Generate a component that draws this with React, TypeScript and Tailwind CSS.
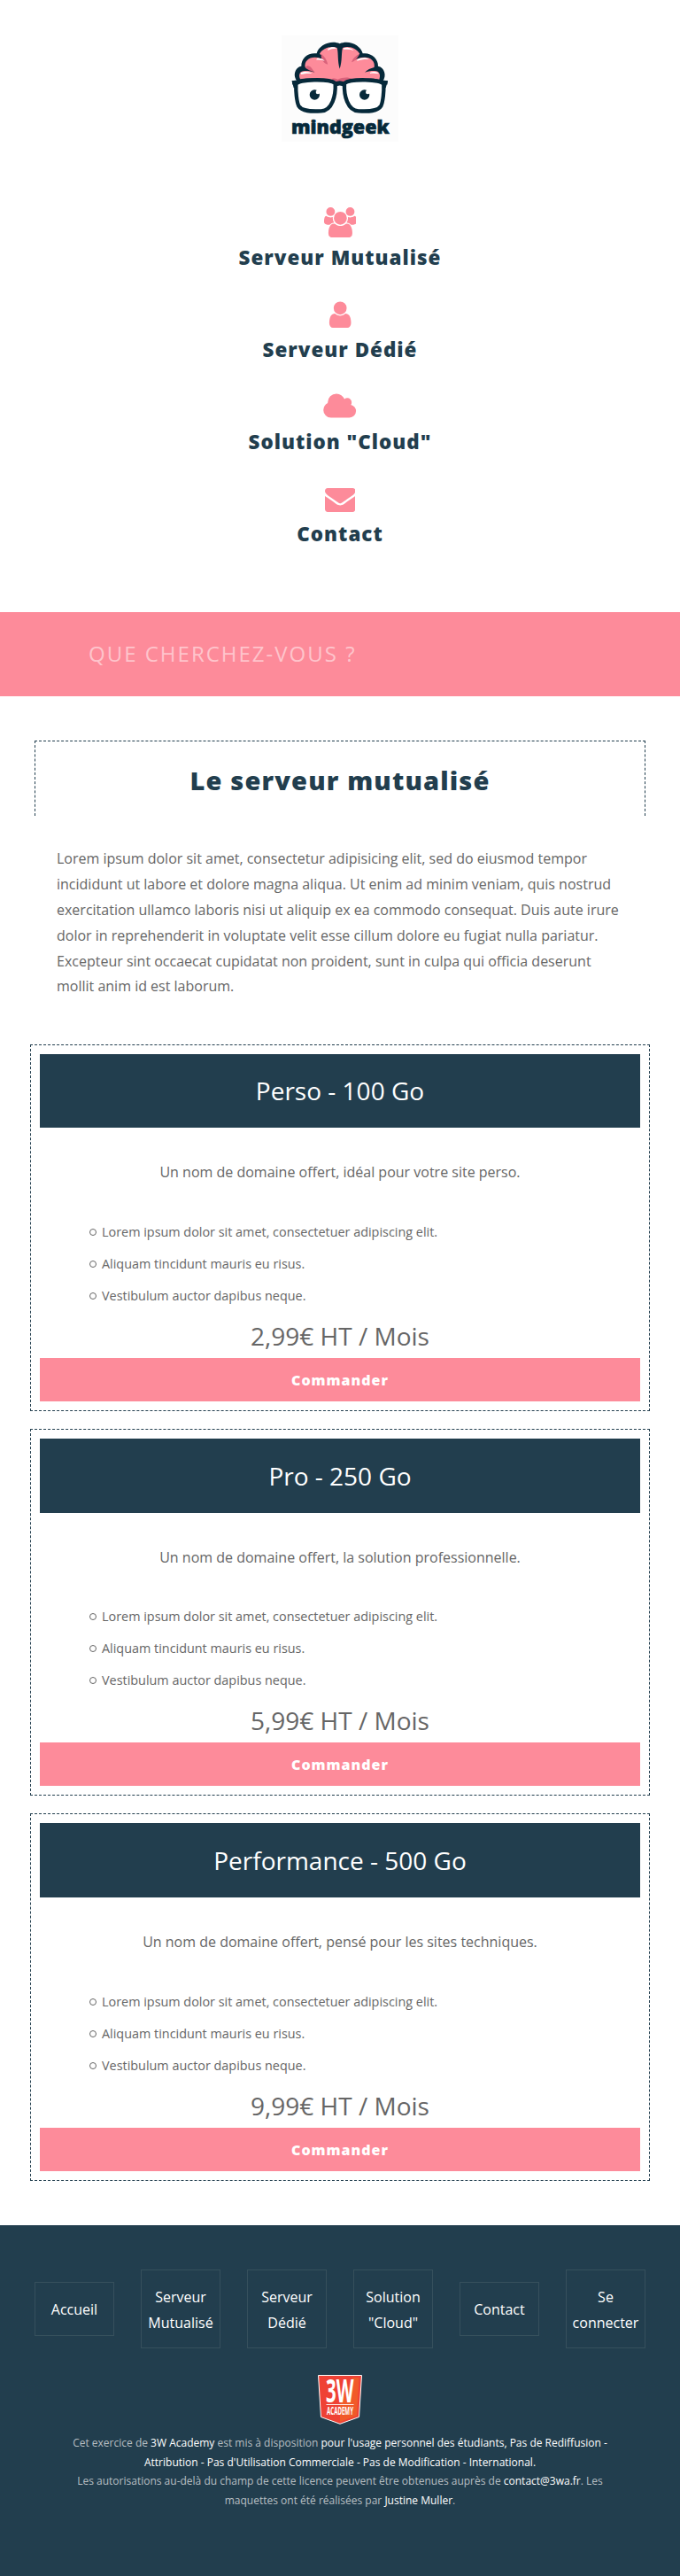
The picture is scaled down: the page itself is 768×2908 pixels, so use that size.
import React from "react";

const ICONS = {
  users: {
    width: 1920,
    d: "M593 896q-162 5-265 128h-134q-82 0-138-40.5t-56-118.5q0-353 124-353 6 0 43.5 21t97.5 42.5 119 21.5q67 0 133-23-5 37-5 66 0 139 81 256zm1071 637q0 120-73 189.5t-194 69.5h-874q-121 0-194-69.5t-73-189.5q0-53 3.5-103.5t14-109 26.5-108.5 43-97.5 62-81 85.5-53.5 111.5-20q10 0 43 21.5t73 48 107 48 135 21.5 135-21.5 107-48 73-48 43-21.5q61 0 111.5 20t85.5 53.5 62 81 43 97.5 26.5 108.5 14 109 3.5 103.5zm-1024-1277q0 106-75 181t-181 75-181-75-75-181 75-181 181-75 181 75 75 181zm704 384q0 159-112.5 271.5t-271.5 112.5-271.5-112.5-112.5-271.5 112.5-271.5 271.5-112.5 271.5 112.5 112.5 271.5zm576 225q0 78-56 118.5t-138 40.5h-134q-103-123-265-128 81-117 81-256 0-29-5-66 66 23 133 23 59 0 119-21.5t97.5-42.5 43.5-21q124 0 124 353zm-128-609q0 106-75 181t-181 75-181-75-75-181 75-181 181-75 181 75 75 181z",
  },
  user: {
    width: 1792,
    d: "M1536 1399q0 109-62.5 187t-150.5 78h-854q-88 0-150.5-78t-62.5-187q0-85 8.5-160.5t31.5-152 58.5-131 94-89 134.5-34.5q131 128 313 128t313-128q76 0 134.5 34.5t94 89 58.5 131 31.5 152 8.5 160.5zm-256-887q0 159-112.5 271.5t-271.5 112.5-271.5-112.5-112.5-271.5 112.5-271.5 271.5-112.5 271.5 112.5 112.5 271.5z",
  },
  cloud: {
    width: 2048,
    d: "M1984 1152q0 159-112.5 271.5t-271.5 112.5h-1088q-185 0-316.5-131.5t-131.5-316.5q0-132 71-241.5t187-163.5q-2-28-2-43 0-212 150-362t362-150q158 0 286.5 88t187.5 230q70-62 166-62 106 0 181 75t75 181q0 75-41 138 129 30 213 134.5t84 239.5z",
  },
  envelope: {
    width: 1792,
    d: "M1792 710v794q0 66-47 113t-113 47h-1472q-66 0-113-47t-47-113v-794q44 49 101 87 362 246 497 345 57 42 92.5 65.5t94.5 48 110 24.5h2q51 0 110-24.5t94.5-48 92.5-65.5q170-123 498-345 57-39 100-87zm0-294q0 79-49 151t-122 123q-376 261-468 325-10 7-42.5 31t-54 38.8-52 33.2-57.5 27.5-50 9h-2q-23 0-50-9t-57.5-27.5-52-33.2-54-38.8-42.5-31q-91-64-262-182.5t-205-142.5q-62-42-117-115.5t-55-136.5q0-78 41.5-130t118.5-52h1472q65 0 112.5 47t47.5 113z",
  },
};

function Icon({ name }: { name: keyof typeof ICONS }) {
  const icon = ICONS[name];
  return (
    <svg className="h-[34.4px] w-auto fill-[#fd8b9a]" viewBox={`0 0 ${icon.width} 1792`}>
      <path d={icon.d} />
    </svg>
  );
}

function Logo() {
  return (
    <svg className="h-[120px] w-[132px] bg-[#fcfcfc]" viewBox="54 60 396 360">
      <path
        d="M108 216C90 196 100 168 121 164C120 136 145 117 173 121C179 93 222 74 251 88C282 74 322 93 329 121C357 117 382 138 381 164C402 168 412 196 396 216Z"
        fill="#06293a"
      />
      <path
        d="M117 208C110 192 116 179 136 180C147 180 156 182 166 185C158 176 146 171 134 168C130 148 146 134 166 134C182 134 193 139 203 147C199 134 193 128 183 123C190 104 222 93 242 102C247 119 243 146 251 173C260 146 256 119 261 102C282 93 310 104 319 123C308 129 300 137 296 147C307 139 319 134 336 134C356 134 372 148 368 168C356 171 344 176 336 185C346 182 355 180 366 180C385 178 391 192 385 209C353 203 305 204 265 222H238C200 204 155 202 117 208Z"
        fill="#fd8b9a"
      />
      <path
        d="M189 123C184 139 199 157 211 158C207 142 199 131 189 123ZM134 168C146 155 156 170 166 185C156 180 142 178 134 168ZM318 124C308 142 301 148 291 151C296 137 306 128 318 124ZM229 218C219 207 226 202 244 209C259 202 280 199 292 207L266 222H239Z"
        fill="#d9627b"
      />
      <path
        d="M174 138C184 136 194 140 200 146C190 143 181 142 172 143ZM211 105C223 98 233 99 240 104C229 104 219 106 211 111ZM264 103C276 98 292 103 299 111C287 107 275 106 265 108ZM310 142C323 134 341 134 351 141C338 140 323 141 310 146ZM119 187C130 180 148 183 158 189C145 188 130 189 120 192ZM354 186C365 181 379 183 383 190C373 188 363 188 354 189Z"
        fill="#fff"
      />
      <path d="M90 220L107 218M395 218L413 220" stroke="#06293a" strokeWidth="13" />
      <path d="M89 214H111V238H95ZM414 214H392V238H407Z" fill="#06293a" />
      <path d="M232 228Q251 215 270 228" fill="none" stroke="#06293a" strokeWidth="15" />
      <path
        d="M103 226C110 207 216 206 236 222C238 263 226 315 188 316C154 318 123 317 112 299C105 284 102 248 103 226Z"
        fill="#fff"
        stroke="#06293a"
        strokeWidth="13"
      />
      <path
        d="M400 226C393 207 287 206 267 222C265 263 277 315 315 316C349 318 380 317 391 299C398 284 401 248 400 226Z"
        fill="#fff"
        stroke="#06293a"
        strokeWidth="13"
      />
      <circle cx="166" cy="261" r="17" fill="#06293a" />
      <circle cx="335" cy="261" r="17" fill="#06293a" />
      <circle cx="177" cy="252" r="7" fill="#fff" />
      <circle cx="346" cy="252" r="7" fill="#fff" />
      <text
        x="87"
        y="392"
        textLength="332"
        lengthAdjust="spacingAndGlyphs"
        fill="#06293a"
        stroke="#06293a"
        strokeWidth="2"
        fontFamily="Open Sans"
        fontWeight="800"
        fontSize="64"
      >
        mindgeek
      </text>
    </svg>
  );
}

function Academy() {
  return (
    <svg className="h-[56px] w-[50px] overflow-visible" viewBox="0 0 50 56">
      <path d="M.5.5H49.5L46.5 47.5L25 55.3L3.5 47.5Z" fill="#ef4135" stroke="#fff" />
      <path d="M39 3H46.5L44 46L25 53V33Z" fill="#f15a29" />
      <g fill="#fff" fontFamily="Open Sans">
        <text x="9" y="30.6" fontSize="36" fontWeight="700" textLength="31.5" lengthAdjust="spacingAndGlyphs">
          3W
        </text>
        <text x="10" y="45" fontSize="12" fontWeight="700" textLength="30" lengthAdjust="spacingAndGlyphs">
          ACADEMY
        </text>
      </g>
      <path d="M9.500 33.500H40.500" stroke="#fff" strokeWidth=".9" />
    </svg>
  );
}

const NAV: { icon: keyof typeof ICONS; label: string }[] = [
  { icon: "users", label: "Serveur Mutualisé" },
  { icon: "user", label: "Serveur Dédié" },
  { icon: "cloud", label: 'Solution "Cloud"' },
  { icon: "envelope", label: "Contact" },
];

const OFFERS = [
  { title: "Perso - 100 Go", text: "Un nom de domaine offert, idéal pour votre site perso.", price: "2,99€ HT / Mois" },
  { title: "Pro - 250 Go", text: "Un nom de domaine offert, la solution professionnelle.", price: "5,99€ HT / Mois" },
  { title: "Performance - 500 Go", text: "Un nom de domaine offert, pensé pour les sites techniques.", price: "9,99€ HT / Mois" },
];

const FEATURES = [
  "Lorem ipsum dolor sit amet, consectetuer adipiscing elit.",
  "Aliquam tincidunt mauris eu risus.",
  "Vestibulum auctor dapibus neque.",
];

const LINKS = ["Accueil", "Serveur Mutualisé", "Serveur Dédié", 'Solution "Cloud"', "Contact", "Se connecter"];

function Offer({ title, text, price }: { title: string; text: string; price: string }) {
  return (
    <article className="border border-dashed border-[#223e4e] p-[10px]">
      <h2 className="flex h-[83.8px] items-center justify-center bg-[#223e4e] text-[28px] text-white">{title}</h2>
      <p className="mt-[36px] text-center leading-[28.8px]">{text}</p>
      <ul className="mt-[34.800px] pb-[1px] pl-[56px] text-[14.4px] leading-[36px]">
        {FEATURES.map((f) => (
          <li key={f} className="flex items-center gap-[6px]">
            <span className="size-[8px] rounded-full border border-[#666]" />
            {f}
          </li>
        ))}
      </ul>
      <p className="pt-[1px] text-center text-[28px] leading-[50px]">{price}</p>
      <button className="block h-[49px] w-full bg-[#fd8b9a] pt-[1px] text-[16px] font-extrabold tracking-[1px] text-white">
        Commander
      </button>
    </article>
  );
}

export default function App() {
  return (
    <div className="h-[2908px] w-[768px] bg-white font-['Open_Sans',sans-serif] text-[16px] text-[#666]">
      <header className="flex h-[691px] flex-col items-center pt-[40px]">
        <Logo />
        <nav className="mt-[74px] flex flex-col items-center">
          {NAV.map((n) => (
            <a key={n.label} className="flex h-[104px] flex-col items-center">
              <Icon name={n.icon} />
              <span className="text-[22.4px] leading-[46.6px] font-extrabold tracking-[1px] text-[#223e4e]">
                {n.label}
              </span>
            </a>
          ))}
        </nav>
      </header>

      <div className="flex h-[95px] items-center bg-[#fd8b9a] px-[100px] pb-[2px]">
        <input
          className="w-full bg-transparent text-[24px] tracking-[2px] text-white placeholder:text-white/50"
          placeholder="QUE CHERCHEZ-VOUS ?"
        />
      </div>

      <main className="flex h-[1726px] flex-col pt-[50px]">
        <h1 className="mx-[39px] h-[85px] border border-b-0 border-dashed border-[#223e4e] text-center text-[29px] leading-[88px] font-extrabold tracking-[1.15px] text-[#223e4e]">
          Le serveur mutualisé
        </h1>
        <p className="mx-[64px] mt-[34.400px] leading-[28.8px]">
          Lorem ipsum dolor sit amet, consectetur adipisicing elit, sed do eiusmod tempor incididunt ut labore et
          dolore magna aliqua. Ut enim ad minim veniam, quis nostrud exercitation ullamco laboris nisi ut aliquip ex ea
          commodo consequat. Duis aute irure dolor in reprehenderit in voluptate velit esse cillum dolore eu fugiat
          nulla pariatur. Excepteur sint occaecat cupidatat non proident, sunt in culpa qui officia deserunt mollit
          anim id est laborum.
        </p>
        <section className="mx-[34px] mt-[50.400px] flex flex-col gap-[20px]">
          {OFFERS.map((o) => (
            <Offer key={o.title} {...o} />
          ))}
        </section>
      </main>

      <footer className="flex h-[396px] flex-col items-center bg-[#223e4e] pt-[50px] text-white">
        <nav className="flex h-[89px] w-[690px] items-center justify-between">
          {LINKS.map((l) => (
            <a
              key={l}
              className="flex w-[90px] items-center justify-center border border-[#36505c] pt-[16px] pb-[14px] text-center leading-[28.8px]"
            >
              {l}
            </a>
          ))}
        </nav>
        <div className="mt-[30px]">
          <Academy />
        </div>
        <p className="mt-[10px] w-[620px] text-center text-[12px] leading-[21.6px] text-[#b8bfc3]">
          Cet exercice de <span className="text-white">3W Academy</span> est mis à disposition{" "}
          <span className="text-white">
            pour l'usage personnel des étudiants, Pas de Rediffusion - Attribution - Pas d'Utilisation Commerciale -
            Pas de Modification - International.
          </span>
          <br />
          Les autorisations au-delà du champ de cette licence peuvent être obtenues auprès de{" "}
          <span className="text-white">contact@3wa.fr</span>. Les maquettes ont été réalisées par{" "}
          <span className="text-white">Justine Muller</span>.
        </p>
      </footer>
    </div>
  );
}
